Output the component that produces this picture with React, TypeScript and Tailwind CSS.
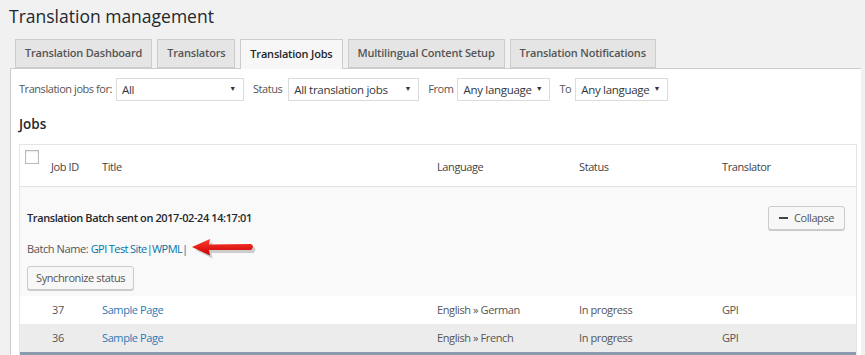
import React from 'react';

const tabs = [
  { label: 'Translation Dashboard', active: false },
  { label: 'Translators', active: false },
  { label: 'Translation Jobs', active: true },
  { label: 'Multilingual Content Setup', active: false },
  { label: 'Translation Notifications', active: false },
];

const rows = [
  { id: '37', title: 'Sample Page', lang: 'English » German', status: 'In progress', who: 'GPI', alt: false },
  { id: '36', title: 'Sample Page', lang: 'English » French', status: 'In progress', who: 'GPI', alt: true },
];

function Select({ value, width }: { value: string; width: string }) {
  return (
    <div className={`${width} h-[23px] shrink-0 bg-white border border-[#dcdcdc] flex items-center justify-between pl-[5px] pr-[7px] text-[11.5px] tracking-[-0.3px] text-[#32373c] whitespace-nowrap`}>
      <span>{value}</span>
      <span className="text-[7px] text-[#333]">▼</span>
    </div>
  );
}

function Arrow() {
  return (
    <svg width="68" height="22" viewBox="0 0 68 22" className="inline-block align-middle ml-[2px] -mt-[3px]">
      <defs>
        <linearGradient id="red" x1="0" y1="0" x2="0" y2="1">
          <stop offset="0" stopColor="#ff3b30" />
          <stop offset="1" stopColor="#c80000" />
        </linearGradient>
      </defs>
      <path d="M4 11 L21 3 L20 8.5 L62 8 Q66 9.5 62 14 L20 14 L21 19.5 Z" fill="#777" opacity="0.35" transform="translate(1.5 2)" />
      <path d="M2 10 L20 2 L19 7.5 L61 7 Q65 9.5 61 13 L19 13 L20 18.5 Z" fill="url(#red)" />
    </svg>
  );
}

export default function App() {
  return (
    <div className="w-[865px] h-[355px] overflow-hidden bg-[#f1f1f1] font-['Open_Sans',sans-serif] text-[#444]">
      <h1 className="pl-[9px] pt-[3px] text-[17.5px] leading-[26px] text-[#23282d]">Translation management</h1>

      <div className="flex items-end gap-[5px] pl-[15px] mt-[10px] relative z-10">
        {tabs.map((t) => (
          <div
            key={t.label}
            className={
              t.active
                ? 'h-[30px] px-[9px] flex items-center border border-[#ccc] border-b-0 bg-[#f7f7f7] text-[11px] font-semibold text-[#23282d] tracking-[-0.2px]'
                : 'h-[29px] mb-px px-[9px] flex items-center border border-[#ccc] bg-[#e5e5e5] text-[11px] font-semibold text-[#555] tracking-[-0.2px]'
            }
          >
            {t.label}
          </div>
        ))}
      </div>

      <div className="ml-[10px] mr-[4px] -mt-px bg-white border-l border-t border-[#ccc] pl-[8px] pr-[4px] pt-[9px] pb-[40px]">
        <div className="flex items-center text-[11px] text-[#555] tracking-[-0.45px]">
          <span className="mr-[4px]">Translation jobs for:</span>
          <Select value="All" width="w-[128px]" />
          <span className="ml-[9px] mr-[6px]">Status</span>
          <Select value="All translation jobs" width="w-[131px]" />
          <span className="ml-[9px] mr-[4px]">From</span>
          <Select value="Any language" width="w-[93px]" />
          <span className="ml-[9px] mr-[4px]">To</span>
          <Select value="Any language" width="w-[93px]" />
        </div>

        <h2 className="mt-[13px] text-[13.5px] font-semibold text-[#23282d] leading-[20px]">Jobs</h2>

        <div className="mt-[10px] border border-[#e5e5e5] border-b-0 text-[11px] tracking-[-0.4px]">
          <div className="grid grid-cols-[31px_51px_335px_142px_143px_1fr] h-[42px] bg-white border-b border-[#e1e1e1] text-[#444]">
            <div className="pl-[5px] pt-[5px]">
              <div className="w-[14px] h-[14px] border border-[#b4b9be] bg-white shadow-[inset_0_1px_2px_rgba(0,0,0,0.1)]" />
            </div>
            <div className="pt-[14px]">Job ID</div>
            <div className="pt-[14px]">Title</div>
            <div className="pt-[14px]">Language</div>
            <div className="pt-[14px]">Status</div>
            <div className="pt-[14px]">Translator</div>
          </div>

          <div className="bg-[#f9f9f9] h-[109px] pl-[7px] pr-[11px] pt-[19px]">
            <div className="flex items-center justify-between">
              <span className="font-semibold text-[#23282d]">Translation Batch sent on 2017-02-24 14:17:01</span>
              <div className="h-[24px] w-[77px] flex items-center justify-center gap-[6px] border border-[#ccc] rounded-[3px] bg-[#f7f7f7] shadow-[0_1px_0_#ccc] text-[#555]">
                <span className="block w-[9px] h-[2px] bg-[#444]" />
                <span>Collapse</span>
              </div>
            </div>
            <div className="mt-[9px] h-[20px] flex items-center text-[#555]">
              <span>Batch Name:&nbsp;</span>
              <span className="text-[#0073aa] font-medium tracking-[-0.6px]">GPI Test Site|WPML|</span>
              <Arrow />
            </div>
            <div className="mt-[7px] inline-flex items-center h-[24px] px-[8px] border border-[#ccc] rounded-[3px] bg-[#f7f7f7] shadow-[0_1px_0_#ccc] text-[#555]">
              Synchronize status
            </div>
          </div>

          {rows.map((r) => (
            <div
              key={r.id}
              className={`grid grid-cols-[31px_51px_335px_142px_143px_1fr] items-center ${r.alt ? 'h-[31px] pt-[1px] bg-[#ececec] border-b-[3px] border-[#8a9bb0]' : 'h-[28px] bg-white'}`}
            >
              <div />
              <div className="pl-[1px] text-[#555]">{r.id}</div>
              <div className="text-[#2a7bb5]">{r.title}</div>
              <div className="text-[#555]">{r.lang}</div>
              <div className="text-[#555]">{r.status}</div>
              <div className="text-[#555]">{r.who}</div>
            </div>
          ))}
        </div>
      </div>
    </div>
  );
}
